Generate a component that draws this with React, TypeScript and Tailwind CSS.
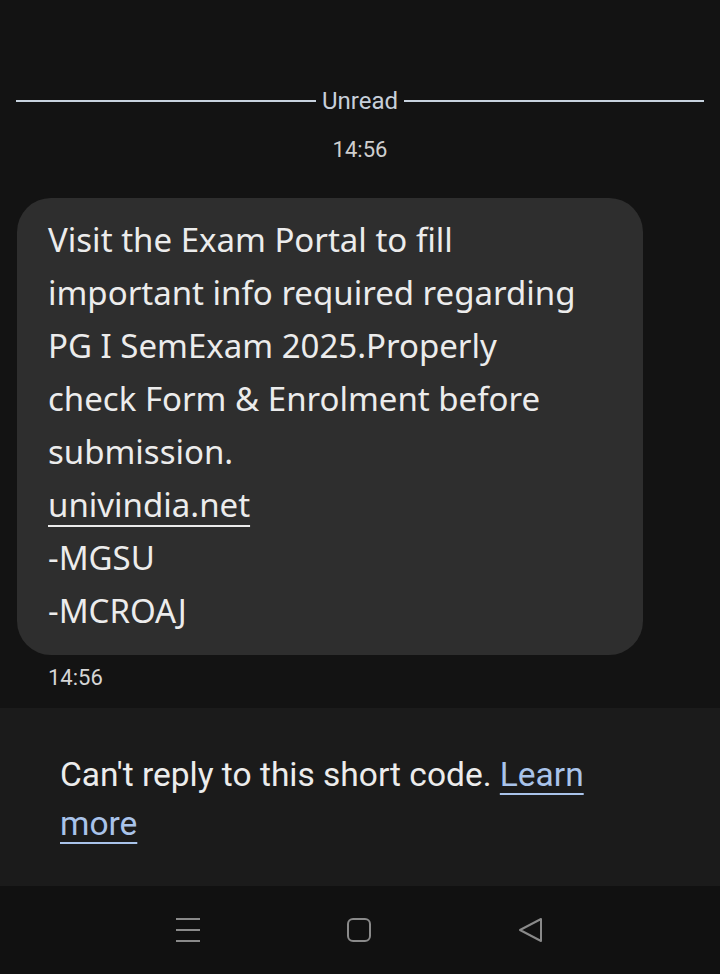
import React from 'react';

const messageLines = [
    'Visit the Exam Portal to fill',
    'important info required regarding',
    'PG I SemExam 2025.Properly',
    'check Form & Enrolment before',
    'submission.',
];

const NavBar: React.FC = () => {
    return (
        <div className="h-[88px] bg-[#111111] flex items-center justify-between px-[176px]">
            <svg width="24" height="26" viewBox="0 0 24 26" fill="none" stroke="#8a8a8a" strokeWidth="2">
                <path d="M0 2h24M0 13h24M0 24h24" />
            </svg>
            <svg width="26" height="26" viewBox="0 0 26 26" fill="none" stroke="#8a8a8a" strokeWidth="2">
                <rect x="2" y="2" width="22" height="22" rx="5" />
            </svg>
            <svg width="26" height="26" viewBox="0 0 26 26" fill="none" stroke="#8a8a8a" strokeWidth="2" strokeLinejoin="round">
                <path d="M23 2v22L2 13z" />
            </svg>
        </div>
    );
};

export default function App() {
    return (
        <div className="w-[720px] h-[974px] bg-[#131313] flex flex-col font-['Roboto',sans-serif] overflow-hidden">
            <div className="flex-1 flex flex-col">
                <div className="h-[86px]" />
                <div className="flex items-center px-4 gap-[6px]">
                    <div className="flex-1 h-[2px] bg-[#c8d3df]" />
                    <span className="text-[24px] leading-[30px] text-[#c7cfda]">Unread</span>
                    <div className="flex-1 h-[2px] bg-[#c8d3df]" />
                </div>
                <div className="text-center text-[22px] leading-[30px] text-[#cfcfcf] mt-[19px]">14:56</div>
                <div className="mt-[33px] ml-[17px] w-[626px] bg-[#2e2e2e] rounded-[34px] pl-[31px] pr-6 pt-[15px] pb-[18px] text-[33px] leading-[53px] text-[#ececec] font-['Noto_Sans',sans-serif] whitespace-nowrap">
                    {messageLines.map((line) => (
                        <div key={line}>{line}</div>
                    ))}
                    <div className="underline underline-offset-[8px] decoration-2">univindia.net</div>
                    <div>-MGSU</div>
                    <div>-MCROAJ</div>
                </div>
                <div className="ml-12 mt-[10px] text-[22px] leading-[26px] text-[#d6d6d6]">14:56</div>
            </div>
            <div className="h-[178px] bg-[#1b1b1b] pl-[60px] pr-[130px] pt-[42px] text-[33.5px] leading-[49px] text-[#ececec]">
                <p>
                    Can't reply to this short code.{' '}
                    <span className="text-[#a9c3ea] underline underline-offset-[7px] decoration-2">Learn</span>
                    <br />
                    <span className="text-[#a9c3ea] underline underline-offset-[7px] decoration-2">more</span>
                </p>
            </div>
            <NavBar />
        </div>
    );
}
